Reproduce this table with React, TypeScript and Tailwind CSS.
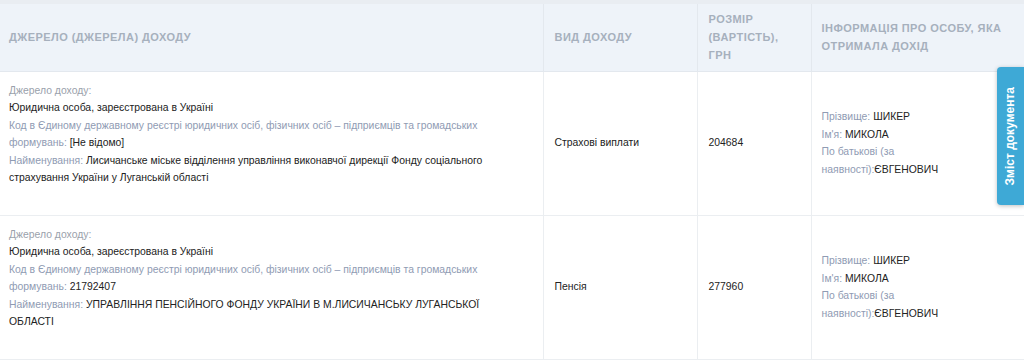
import React from "react";

const rows = [
  {
    code: "[Не відомо]",
    name: "Лисичанське міське відділення управління виконавчої дирекції Фонду соціального страхування України у Луганській області",
    kind: "Страхові виплати",
    amount: "204684",
  },
  {
    code: "21792407",
    name: "УПРАВЛІННЯ ПЕНСІЙНОГО ФОНДУ УКРАЇНИ В М.ЛИСИЧАНСЬКУ ЛУГАНСЬКОЇ ОБЛАСТІ",
    kind: "Пенсія",
    amount: "277960",
  },
];

export default function App() {
  return (
    <div
      className="relative w-[1024px] h-[364px] overflow-hidden bg-white text-[10.4px] leading-[17.5px] text-[#222]"
      style={{ fontFamily: '"Liberation Sans", Arial, sans-serif' }}
    >
      <table className="w-[1024px] table-fixed border-collapse border-t-4 border-t-[#e9edf2]">
        <colgroup>
          <col className="w-[543px]" />
          <col className="w-[154px]" />
          <col className="w-[114px]" />
          <col className="w-[213px]" />
        </colgroup>
        <thead>
          <tr className="h-[69px] bg-[#eef3f9] text-left align-middle text-[11px] font-bold uppercase leading-[18px] tracking-[0.45px] text-[#a6b0bd]">
            <th className="border-b border-[#e3e8ee] pl-[9px] pr-[10px]">Джерело (джерела) доходу</th>
            <th className="border-b border-l border-[#e3e8ee] pl-[11px] pr-[10px]">Вид доходу</th>
            <th className="border-b border-l border-[#e3e8ee] pl-[11px] pr-[10px]">Розмір (вартість), грн</th>
            <th className="border-b border-l border-[#e3e8ee] pl-[10px] pr-[6px]">Інформація про особу, яка отримала дохід</th>
          </tr>
        </thead>
        <tbody>
          {rows.map((r, i) => (
            <tr key={i} className="h-[144px]">
              <td className="border-b border-[#ebeef1] pl-[9px] pr-[50px] pt-[10px] align-top">
                <div className="text-[#9aa1ab]">Джерело доходу:</div>
                <div>Юридична особа, зареєстрована в Україні</div>
                <div>
                  <span className="text-[#8f9bb3]">
                    Код в Єдиному державному реєстрі юридичних осіб, фізичних осіб – підприємців та громадських формувань:
                  </span>{" "}
                  {r.code}
                </div>
                <div>
                  <span className="text-[#8f9bb3]">Найменування:</span> {r.name}
                </div>
              </td>
              <td className="border-b border-l border-[#ebeef1] pl-[11px] pr-[10px] align-middle">{r.kind}</td>
              <td className="border-b border-l border-[#ebeef1] pl-[11px] pr-[10px] align-middle">{r.amount}</td>
              <td className="border-b border-l border-[#ebeef1] pl-[10px] pr-[90px] align-middle">
                <div>
                  <span className="text-[#8f9bb3]">Прізвище:</span> ШИКЕР
                </div>
                <div>
                  <span className="text-[#8f9bb3]">Ім'я:</span> МИКОЛА
                </div>
                <div>
                  <span className="text-[#8f9bb3]">По батькові (за наявності):</span>ЄВГЕНОВИЧ
                </div>
              </td>
            </tr>
          ))}
        </tbody>
      </table>
      <div className="absolute right-0 top-[67px] flex h-[138px] w-[27px] items-center justify-center rounded-l-[4px] bg-[#3ea9d6] shadow-[0_1px_4px_rgba(0,0,0,0.25)]">
        <span className="rotate-180 whitespace-nowrap text-[12px] font-bold text-white [writing-mode:vertical-rl]">
          Зміст документа
        </span>
      </div>
    </div>
  );
}
